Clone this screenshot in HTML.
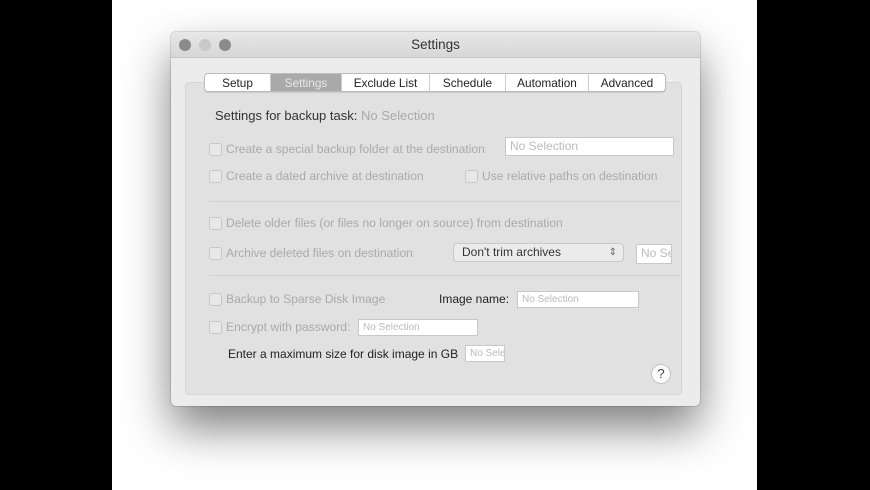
<!DOCTYPE html><html><head><style>
body{margin:0;width:870px;height:490px;background:#fff;position:relative;overflow:hidden;font-family:"Liberation Sans",sans-serif;}
.bl{position:absolute;top:0;bottom:0;background:#000}
.win{position:absolute;left:171px;top:32px;width:529px;height:374px;background:#ececec;border-radius:5px;box-shadow:0 22px 45px rgba(0,0,0,.5),0 0 0 1px rgba(0,0,0,.12)}
.tb{height:25px;background:linear-gradient(#e8e8e8,#d6d6d6);border-bottom:1px solid #c4c4c4;border-radius:5px 5px 0 0;text-align:center;font-size:13.5px;line-height:26px;color:#333}
.dot{position:absolute;top:7px;width:12px;height:12px;border-radius:50%;background:#8a8a8a}
.box{position:absolute;left:14px;top:50px;width:495px;height:311px;background:#e1e1e1;border-radius:4px;border:1px solid #d6d6d6}
.tabs{position:absolute;left:33px;top:41px;height:17px;display:flex;border:1px solid #bbb;border-radius:4px;background:#fff;font-size:11.8px;line-height:18px;overflow:hidden;box-shadow:0 1px 1px rgba(0,0,0,.1)}
.tabs div{text-align:center;border-right:1px solid #ccc;color:#222}
.t{position:absolute;font-size:12.1px;color:#aaa;white-space:nowrap}
.cb{position:absolute;width:11px;height:11px;border:1px solid #c8c8c8;border-radius:3px;background:#e8e8e8}
.in{position:absolute;background:#fff;border:1px solid #c8c8c8;color:#bbb;font-size:11.5px;line-height:17px;padding-left:4px;overflow:hidden;white-space:nowrap;box-sizing:border-box}
.hr{position:absolute;left:38px;width:471px;height:1px;background:#d2d2d2}
</style></head><body>
<div class="bl" style="left:0;width:112px"></div>
<div class="bl" style="left:757px;width:113px"></div>
<div class="win">
<div class="tb">Settings</div>
<div class="dot" style="left:8px"></div><div class="dot" style="left:28px;background:#c8c8c8"></div><div class="dot" style="left:48px"></div>
<div class="box"></div>
<div class="tabs">
<div style="width:65px">Setup</div>
<div style="width:70px;background:#a9a9a9;color:#e8e8e8">Settings</div>
<div style="width:87px">Exclude List</div>
<div style="width:75px">Schedule</div>
<div style="width:82px">Automation</div>
<div style="width:76px;border-right:0">Advanced</div>
</div>
<div class="t" style="left:44px;top:76px;font-size:13px;color:#333">Settings for backup task: <span style="color:#aaa">No Selection</span></div>
<div class="cb" style="left:38px;top:111px"></div><div class="t" style="left:55px;top:110px">Create a special backup folder at the destination</div>
<div class="in" style="left:334px;top:105px;width:169px;height:19px;font-size:12px">No Selection</div>
<div class="cb" style="left:38px;top:138px"></div><div class="t" style="left:55px;top:137px">Create a dated archive at destination</div>
<div class="cb" style="left:294px;top:138px"></div><div class="t" style="left:311px;top:137px">Use relative paths on destination</div>
<div class="hr" style="top:169px"></div>
<div class="cb" style="left:38px;top:185px"></div><div class="t" style="left:55px;top:184px">Delete older files (or files no longer on source) from destination</div>
<div class="cb" style="left:38px;top:215px"></div><div class="t" style="left:55px;top:214px">Archive deleted files on destination</div>
<div class="in" style="left:282px;top:211px;width:171px;height:19px;border-radius:4px;color:#333;font-size:12px;padding-left:8px;background:#ebebeb">Don't trim archives<span style="position:absolute;right:6px;top:0;font-size:10px;color:#666">⇕</span></div>
<div class="in" style="left:465px;top:212px;width:36px;height:20px;font-size:12px">No Sel</div>
<div class="hr" style="top:243px"></div>
<div class="cb" style="left:38px;top:261px"></div><div class="t" style="left:55px;top:260px">Backup to Sparse Disk Image</div>
<div class="t" style="left:268px;top:260px;color:#222;font-size:12px">Image name:</div>
<div class="in" style="left:346px;top:259px;width:122px;height:17px;font-size:10px;line-height:15px">No Selection</div>
<div class="cb" style="left:38px;top:289px"></div><div class="t" style="left:55px;top:288px">Encrypt with password:</div>
<div class="in" style="left:187px;top:287px;width:120px;height:17px;font-size:10px;line-height:15px">No Selection</div>
<div class="t" style="left:57px;top:315px;color:#222;font-size:12px">Enter a maximum size for disk image in GB</div>
<div class="in" style="left:294px;top:313px;width:40px;height:17px;font-size:10px;line-height:15px">No Selection</div>
<div style="position:absolute;left:480px;top:332px;width:18px;height:18px;border-radius:50%;background:#fafafa;border:1px solid #c4c4c4;text-align:center;font-size:13px;line-height:18px;color:#444">?</div>
</div>
</body></html>
